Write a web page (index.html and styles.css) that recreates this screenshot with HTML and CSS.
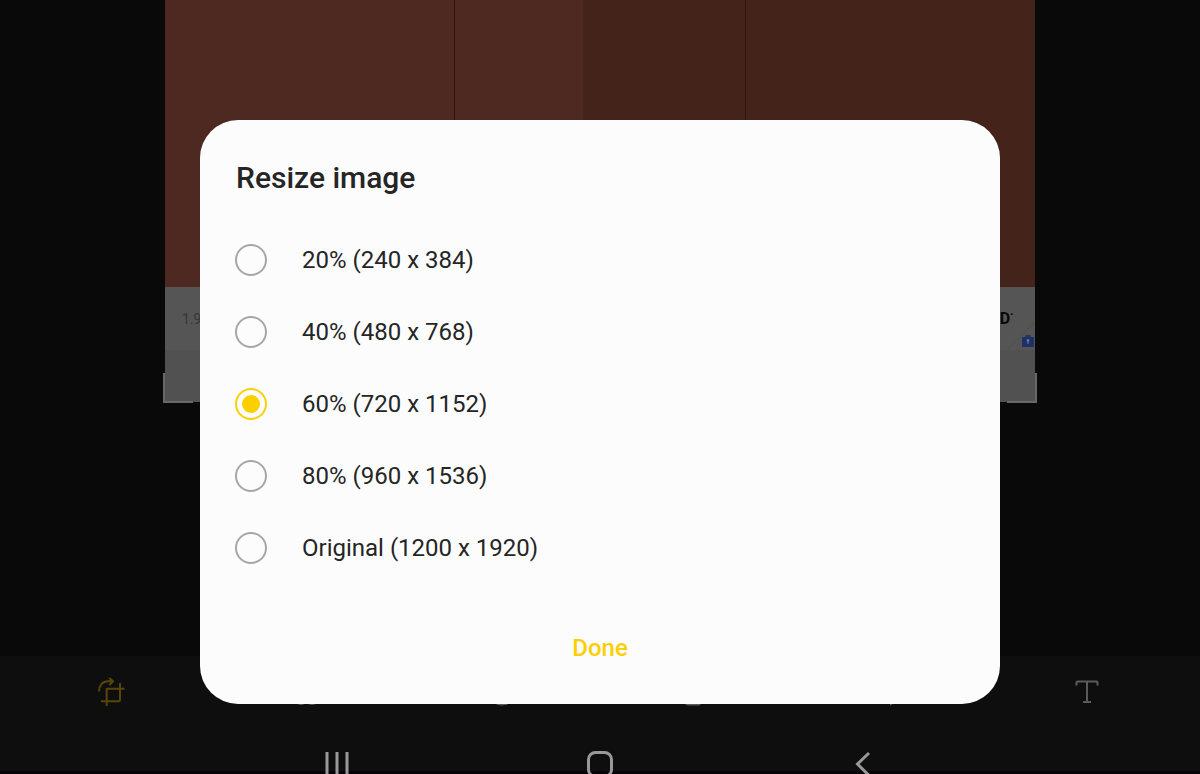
FILE: index.html
```html
<!DOCTYPE html>
<html lang="en">
<head>
<meta charset="utf-8">
<meta name="viewport" content="width=device-width, initial-scale=1">
<title>Resize image</title>
<link rel="stylesheet" href="styles.css">
</head>
<body>
<div class="screen">
  <main class="editor">
    <div class="photo">
      <div class="panels">
        <div class="panel panel-a"></div>
        <div class="panel panel-b"></div>
        <div class="panel panel-c"></div>
        <div class="panel panel-d"></div>
      </div>
      <div class="caption">
        <span class="caption-left">1.9</span>
        <span class="caption-right">D<span class="mark">•</span></span>
        <svg class="fold" viewBox="0 0 28 28" aria-hidden="true"><path d="M1 27 27 1" stroke="#4d4d4d"/></svg>
        <svg class="case" viewBox="0 0 12 12" aria-hidden="true"><path d="M4 3V1h4v2" fill="none" stroke="#1d3168" stroke-width="1.4"/><rect y="2" width="12" height="10" rx="1" fill="#1d3168"/><circle cx="6" cy="5.5" r="1.4" fill="#69728a"/><path d="M6 6v3" stroke="#69728a" stroke-width="1.2"/></svg>
      </div>
      <div class="footer-strip"></div>
      <span class="handle handle-left"></span>
      <span class="handle handle-right"></span>
    </div>
  </main>
  <div class="toolbar">
    <button class="tool tool-active" type="button" aria-label="Crop and rotate">
      <svg viewBox="0 0 28 28"><path d="M9.700 10V28M9.700 10.700H27.500M23 5V22Q23 23.300 21.700 23.300H4M2 13.500C2 7.500 5.500 3.300 11 3.300H16M12.300 0 16 3.300 12.300 7"/></svg>
    </button>
    <button class="tool" type="button" aria-label="Filters">
      <svg viewBox="0 0 28 28"><circle cx="9" cy="20" r="6"/><circle cx="20" cy="20" r="6"/><circle cx="14" cy="10" r="6"/></svg>
    </button>
    <button class="tool" type="button" aria-label="Tone">
      <svg viewBox="0 0 28 28"><circle cx="14" cy="14" r="12.500"/></svg>
    </button>
    <button class="tool" type="button" aria-label="Stickers">
      <svg viewBox="0 0 28 28"><path d="M15 26.500H5Q1 26.500 1 22V6Q1 2 5 2H19Q23 2 23 6V18Z"/></svg>
    </button>
    <button class="tool" type="button" aria-label="Draw">
      <svg viewBox="0 0 28 28"><path d="M20 2 25 7 15 24 12 26 12 21Z"/></svg>
    </button>
    <button class="tool" type="button" aria-label="Text">
      <svg viewBox="0 0 28 28"><path d="M1.500 7.500V4.500Q1.500 3.500 2.500 3.500H21.500Q22.500 3.500 22.500 4.500V7.500M12 3V24M8 24H16"/></svg>
    </button>
  </div>
  <nav class="system-nav" aria-label="System">
    <button class="nav-key" type="button" aria-label="Recents"><svg viewBox="0 0 28 28"><path d="M4 2V26M14 2V26M24 2V26"/></svg></button>
    <button class="nav-key" type="button" aria-label="Home"><svg viewBox="0 0 28 28"><rect x="2.500" y="2.500" width="23" height="24" rx="7"/></svg></button>
    <button class="nav-key" type="button" aria-label="Back"><svg viewBox="0 0 28 28"><path d="M20 3 8.500 14 20 25.500"/></svg></button>
  </nav>
  <form class="dialog" role="dialog" aria-labelledby="dialog-title">
    <h1 class="title" id="dialog-title">Resize image</h1>
    <div class="options">
      <label class="option"><input class="radio" type="radio" name="size">20% (240 x 384)</label>
      <label class="option"><input class="radio" type="radio" name="size">40% (480 x 768)</label>
      <label class="option"><input class="radio" type="radio" name="size" checked>60% (720 x 1152)</label>
      <label class="option"><input class="radio" type="radio" name="size">80% (960 x 1536)</label>
      <label class="option"><input class="radio" type="radio" name="size">Original (1200 x 1920)</label>
    </div>
    <button class="done" type="button">Done</button>
  </form>
</div>
</body>
</html>
```
FILE: styles.css
```css
* {
  box-sizing: border-box;
}

body {
  margin: 0;
  background: #090909;
  font-family: Roboto, "Liberation Sans", sans-serif;
  color: #252525;
}

button {
  padding: 0;
  border: 0;
  background: none;
  font: inherit;
}

.screen {
  position: relative;
  display: flex;
  flex-direction: column;
  height: 100vh;
  min-height: 660px;
  overflow: hidden;
}

.editor {
  flex: 1;
}

.photo {
  position: relative;
  width: 72.5%;
  margin: 0 auto;
}

.panels {
  display: grid;
  grid-template-columns: 290fr 128fr 163fr 289fr;
  height: 287px;
}

.panel-a,
.panel-b {
  background: #4e2922;
}

.panel-c,
.panel-d {
  background: #44231b;
}

.panel-a,
.panel-c {
  border-right: 1px solid #2b1511;
}

.caption {
  position: relative;
  display: flex;
  justify-content: space-between;
  height: 63px;
  padding: 20px 22px 0 17px;
  background: #555555;
  font-size: 14px;
  line-height: 24px;
}

.caption-left {
  color: #363636;
}

.caption-right {
  color: #080808;
  font-size: 16px;
  font-weight: 700;
}

.mark {
  font-size: 8px;
  line-height: 16px;
  vertical-align: top;
}

.fold {
  position: absolute;
  right: 0;
  bottom: 0;
  width: 28px;
  height: 28px;
}

.case {
  position: absolute;
  right: 1px;
  bottom: 3px;
  width: 12px;
  height: 12px;
}

.footer-strip {
  height: 52px;
  background: #515151;
}

.handle {
  position: absolute;
  bottom: -1px;
  width: 30px;
  height: 30px;
  border-bottom: 2px solid #686868;
}

.handle-left {
  left: -2px;
  border-left: 2px solid #686868;
}

.handle-right {
  right: -2px;
  border-right: 2px solid #686868;
}

.toolbar {
  display: grid;
  grid-template-columns: repeat(6, 1fr);
  height: 72px;
  padding: 0 13px;
  background: #0e0e0e;
}

.tool {
  display: grid;
  place-items: center;
}

.tool svg {
  width: 28px;
  height: 28px;
  overflow: visible;
  fill: none;
  stroke: #5b5b5b;
  stroke-width: 2;
}

.tool-active svg {
  stroke: #594606;
}

.system-nav {
  display: grid;
  grid-template-columns: repeat(3, 263px);
  justify-content: center;
  height: 46px;
  padding-top: 22px;
  overflow: hidden;
  background: linear-gradient(#0e0e0e 43px, #080306 43px);
}

.nav-key {
  display: grid;
  justify-items: center;
  height: 28px;
}

.nav-key svg {
  width: 28px;
  height: 28px;
  fill: none;
  stroke: #999999;
  stroke-width: 3;
}

.dialog {
  position: absolute;
  right: 0;
  bottom: 70px;
  left: 0;
  width: 66.6667%;
  margin: 0 auto;
  padding: 36px 36px 28px;
  border-radius: 38px;
  background: #fcfcfc;
}

.title {
  margin: 0;
  font-size: 30px;
  font-weight: 500;
  line-height: 44px;
}

.options {
  margin: 0 -1px;
  padding-top: 24px;
}

.option {
  display: flex;
  align-items: center;
  gap: 35px;
  height: 72px;
  font-size: 24px;
  line-height: 32px;
}

.radio {
  display: grid;
  place-items: center;
  width: 32px;
  height: 32px;
  margin: 0;
  border: 2px solid #a6a6a6;
  border-radius: 50%;
  appearance: none;
}

.radio:checked {
  border-color: #fcd000;
}

.radio:checked::before {
  width: 18px;
  height: 18px;
  border-radius: 50%;
  background: #fcd000;
  content: "";
}

.done {
  display: block;
  width: 100%;
  height: 56px;
  margin-top: 36px;
  color: #fcd000;
  font-size: 24px;
  font-weight: 500;
  line-height: 56px;
}
```
